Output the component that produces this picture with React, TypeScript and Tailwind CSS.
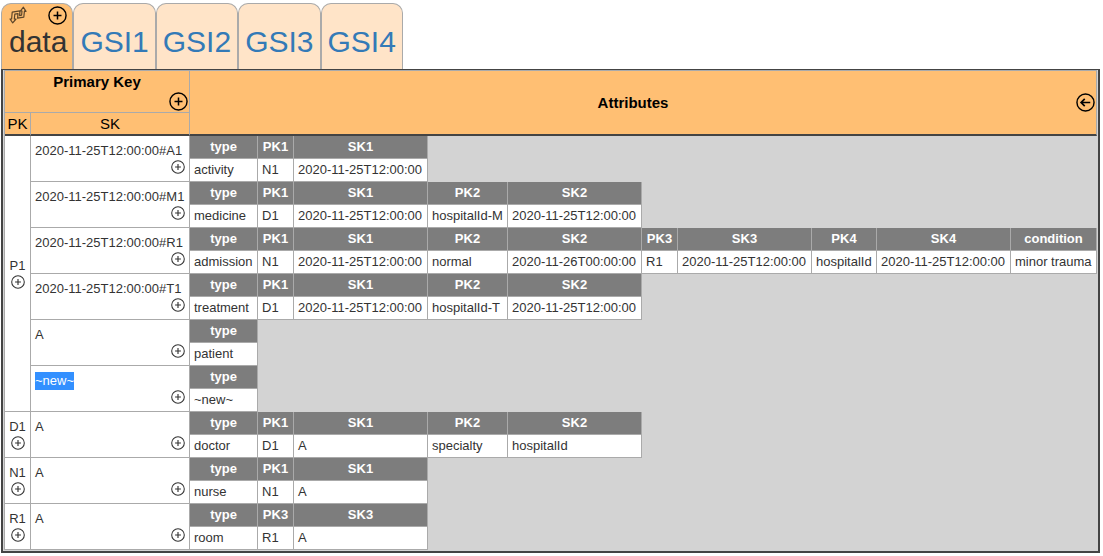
import React from "react";

type Item = { pk?: string; pkRows?: number; sk: string; selected?: boolean; attrs: [string, string][] };

const T = "2020-11-25T12:00:00";

const items: Item[] = [
  { pk: "P1", pkRows: 6, sk: `${T}#A1`, attrs: [["type", "activity"], ["PK1", "N1"], ["SK1", T]] },
  { sk: `${T}#M1`, attrs: [["type", "medicine"], ["PK1", "D1"], ["SK1", T], ["PK2", "hospitalId-M"], ["SK2", T]] },
  {
    sk: `${T}#R1`,
    attrs: [
      ["type", "admission"], ["PK1", "N1"], ["SK1", T], ["PK2", "normal"], ["SK2", "2020-11-26T00:00:00"],
      ["PK3", "R1"], ["SK3", T], ["PK4", "hospitalId"], ["SK4", T], ["condition", "minor trauma"],
    ],
  },
  { sk: `${T}#T1`, attrs: [["type", "treatment"], ["PK1", "D1"], ["SK1", T], ["PK2", "hospitalId-T"], ["SK2", T]] },
  { sk: "A", attrs: [["type", "patient"]] },
  { sk: "~new~", selected: true, attrs: [["type", "~new~"]] },
  { pk: "D1", pkRows: 1, sk: "A", attrs: [["type", "doctor"], ["PK1", "D1"], ["SK1", "A"], ["PK2", "specialty"], ["SK2", "hospitalId"]] },
  { pk: "N1", pkRows: 1, sk: "A", attrs: [["type", "nurse"], ["PK1", "N1"], ["SK1", "A"]] },
  { pk: "R1", pkRows: 1, sk: "A", attrs: [["type", "room"], ["PK3", "R1"], ["SK3", "A"]] },
];

const ATTR_COLUMNS = 10;

function PlusIcon({ className }: { className: string }) {
  return (
    <svg viewBox="0 0 20 20" className={className} fill="none" stroke="currentColor" aria-hidden="true">
      <circle cx="10" cy="10" r="9" strokeWidth="1.5" />
      <path d="M10 5.8v8.4M5.8 10h8.4" strokeWidth="1.6" />
    </svg>
  );
}

function BackIcon({ className }: { className: string }) {
  return (
    <svg viewBox="0 0 20 20" className={className} fill="none" stroke="currentColor" aria-hidden="true">
      <circle cx="10" cy="10" r="9" strokeWidth="1.5" />
      <path d="M5.5 10h9.5M9.2 6.2L5.4 10l3.8 3.8" strokeWidth="1.8" />
    </svg>
  );
}

function SwapIcon() {
  return (
    <svg viewBox="0 0 18 18" className="block size-[18px]" fill="none" stroke="currentColor" strokeWidth="1.2" strokeLinejoin="round" aria-hidden="true">
      <path d="M14.4 1.2L17 5.4L15.4 5.2L14.8 11.2L8.6 12.2L9 7.6L5.8 8.2L5.3 13H7L3.7 16.8L1 13L2.6 13L3.2 6.2L11 4.8L10.6 9.6L12.6 9.2L13 5L11.6 4.8Z" />
    </svg>
  );
}

function AddButton({ label }: { label: string }) {
  return (
    <button type="button" aria-label={label} className="block size-[14px] text-[#333]">
      <PlusIcon className="block size-[14px]" />
    </button>
  );
}

const tabs = ["GSI1", "GSI2", "GSI3", "GSI4"];

export default function App() {
  return (
    <main className="pt-[3px] pr-[3px] pl-px font-['Liberation_Sans',Arial,sans-serif] text-[13px] leading-[18px] text-[#333]">
      <nav className="flex h-[66px] text-[30px] leading-[34px]">
        <div className="flex flex-col rounded-t-[10px] border border-b-0 border-[#aaa] bg-[#ffbf73] pr-[5px] pl-[7px]">
          <div className="flex h-[21px] items-center justify-between pt-px">
            <button type="button" aria-label="Swap keys" className="text-[#5c4529]">
              <SwapIcon />
            </button>
            <button type="button" aria-label="Add index" className="text-black">
              <PlusIcon className="block size-[19px]" />
            </button>
          </div>
          <a href="#data" className="text-[#333]">data</a>
        </div>
        {tabs.map((t) => (
          <a key={t} href={`#${t}`} className="rounded-t-[10px] border border-b-0 border-[#aaa] bg-[#ffe4c8] px-[6px] pt-[21px] text-[#337ab7]">
            {t}
          </a>
        ))}
      </nav>
      <div className="border-2 border-t border-[#444] bg-[#d3d3d3] px-px pb-px">
        <table className="w-full table-fixed border-separate border-spacing-0 border-t border-l border-[#aaa]">
          <colgroup>
            <col className="w-[26px]" />
            <col className="w-[159px]" />
            <col className="w-[68px]" />
            <col className="w-[36px]" />
            <col className="w-[134px]" />
            <col className="w-[80px]" />
            <col className="w-[134px]" />
            <col className="w-[36px]" />
            <col className="w-[134px]" />
            <col className="w-[65px]" />
            <col className="w-[134px]" />
            <col />
          </colgroup>
          <thead className="bg-[#ffbf73] text-[15px] text-black">
            <tr className="h-[42px]">
              <th colSpan={2} className="border-r border-b border-[#aaa] p-0 align-top">
                <div className="flex flex-col">
                  <span className="pt-px leading-[20px]">Primary Key</span>
                  <button type="button" aria-label="Add primary key" className="self-end pr-px">
                    <PlusIcon className="block size-[19px]" />
                  </button>
                </div>
              </th>
              <th colSpan={ATTR_COLUMNS} rowSpan={2} className="border-r border-b-2 border-r-[#aaa] border-b-[#444] p-0">
                <div className="flex items-center">
                  <span className="grow">Attributes</span>
                  <button type="button" aria-label="Collapse attributes" className="pr-px">
                    <BackIcon className="block size-[19px]" />
                  </button>
                </div>
              </th>
            </tr>
            <tr className="h-[23px]">
              <th className="border-r border-b-2 border-r-[#aaa] border-b-[#444] p-0 font-normal">PK</th>
              <th className="border-r border-b-2 border-r-[#aaa] border-b-[#444] p-0 font-normal">SK</th>
            </tr>
          </thead>
          <tbody>
            {items.map((item, i) => (
              <React.Fragment key={i}>
                <tr className="h-[23px]">
                  {item.pk && (
                    <td rowSpan={item.pkRows! * 2} className="border-r border-b border-[#aaa] bg-white p-0">
                      <div className="flex flex-col items-center pb-[2px]">
                        <span>{item.pk}</span>
                        <AddButton label={`Add item to ${item.pk}`} />
                      </div>
                    </td>
                  )}
                  <td rowSpan={2} className="border-r border-b border-[#aaa] bg-white p-0 align-top">
                    <div className="flex flex-col items-start px-[4px] pt-[6px]">
                      <span className={item.selected ? "bg-[#3390ff] text-white" : ""}>{item.sk}</span>
                      <span className="self-end">
                        <AddButton label={`Add attribute to ${item.sk}`} />
                      </span>
                    </div>
                  </td>
                  {item.attrs.map(([name]) => (
                    <th key={name} className="border-r border-b border-[#aaa] bg-[#7d7d7d] p-0 whitespace-nowrap text-white">{name}</th>
                  ))}
                  {item.attrs.length < ATTR_COLUMNS && <td colSpan={ATTR_COLUMNS - item.attrs.length} rowSpan={2} className="p-0" />}
                </tr>
                <tr className="h-[23px]">
                  {item.attrs.map(([name, value]) => (
                    <td key={name} className="border-r border-b border-[#aaa] bg-white p-0 pl-[4px] whitespace-nowrap">{value}</td>
                  ))}
                </tr>
              </React.Fragment>
            ))}
          </tbody>
        </table>
      </div>
    </main>
  );
}
